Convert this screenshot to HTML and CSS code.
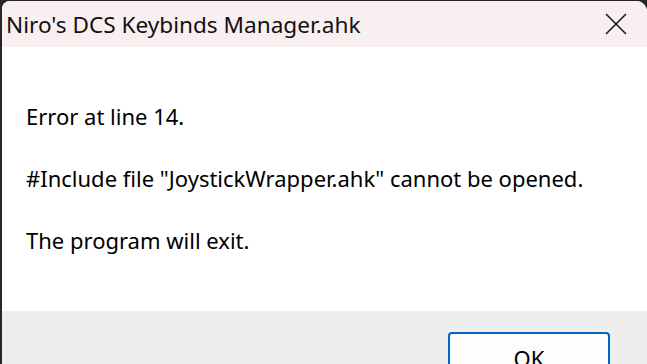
FILE: index.html
```html
<!DOCTYPE html>
<html>
<head>
<meta charset="utf-8">
<link rel="stylesheet" href="styles.css">
</head>
<body>
<div class="window">
  <div class="titlebar">
    <span class="title">Niro's DCS Keybinds Manager.ahk</span>
    <span class="close">
      <svg width="22" height="22" viewBox="0 0 22 22"><path d="M1 1 L21 21 M21 1 L1 21" stroke="#1b1b1b" stroke-width="1.6" fill="none"/></svg>
    </span>
  </div>
  <div class="content">
    <p>Error at line 14.</p>
    <p>#Include file "JoystickWrapper.ahk" cannot be opened.</p>
    <p>The program will exit.</p>
  </div>
  <div class="footer">
    <button class="ok">OK</button>
  </div>
</div>
</body>
</html>
```
FILE: styles.css
```css
html, body {
  margin: 0;
  height: 100%;
  overflow: hidden;
}
body {
  background: #262626;
  padding: 1px 0 0 2px;
  box-sizing: border-box;
  font-family: "Noto Sans", "Open Sans", sans-serif;
  color: #000;
}
.window {
  height: 100%;
  display: flex;
  flex-direction: column;
  border-radius: 8px 11px 0 0;
  overflow: hidden;
  background: #fff;
}
.titlebar {
  height: 46px;
  flex: none;
  background: #f9eff0;
  display: flex;
  align-items: center;
  justify-content: space-between;
  padding-left: 4px;
}
.title {
  font-size: 22.6px;
  color: #111;
  margin-top: 1px;
}
.close {
  width: 60px;
  display: flex;
  justify-content: center;
  margin-right: 1px;
}
.close svg { display: block; }
.content {
  height: 264px;
  flex: none;
  padding: 54px 0 0 24px;
  box-sizing: border-box;
}
.content p {
  margin: 0 0 31px 0;
  font-size: 22px;
  line-height: 31px;
}
.footer {
  flex: 1;
  background: #eeeeee;
  padding: 21px 0 0 446px;
}
.ok {
  width: 162px;
  height: 44px;
  background: #fdfdfd;
  border: 2px solid #0067c0;
  border-radius: 4px;
  font-family: inherit;
  font-size: 22px;
  color: #000;
  padding: 9px 0 0 0;
  display: flex;
  justify-content: center;
  align-items: flex-start;
}
```
